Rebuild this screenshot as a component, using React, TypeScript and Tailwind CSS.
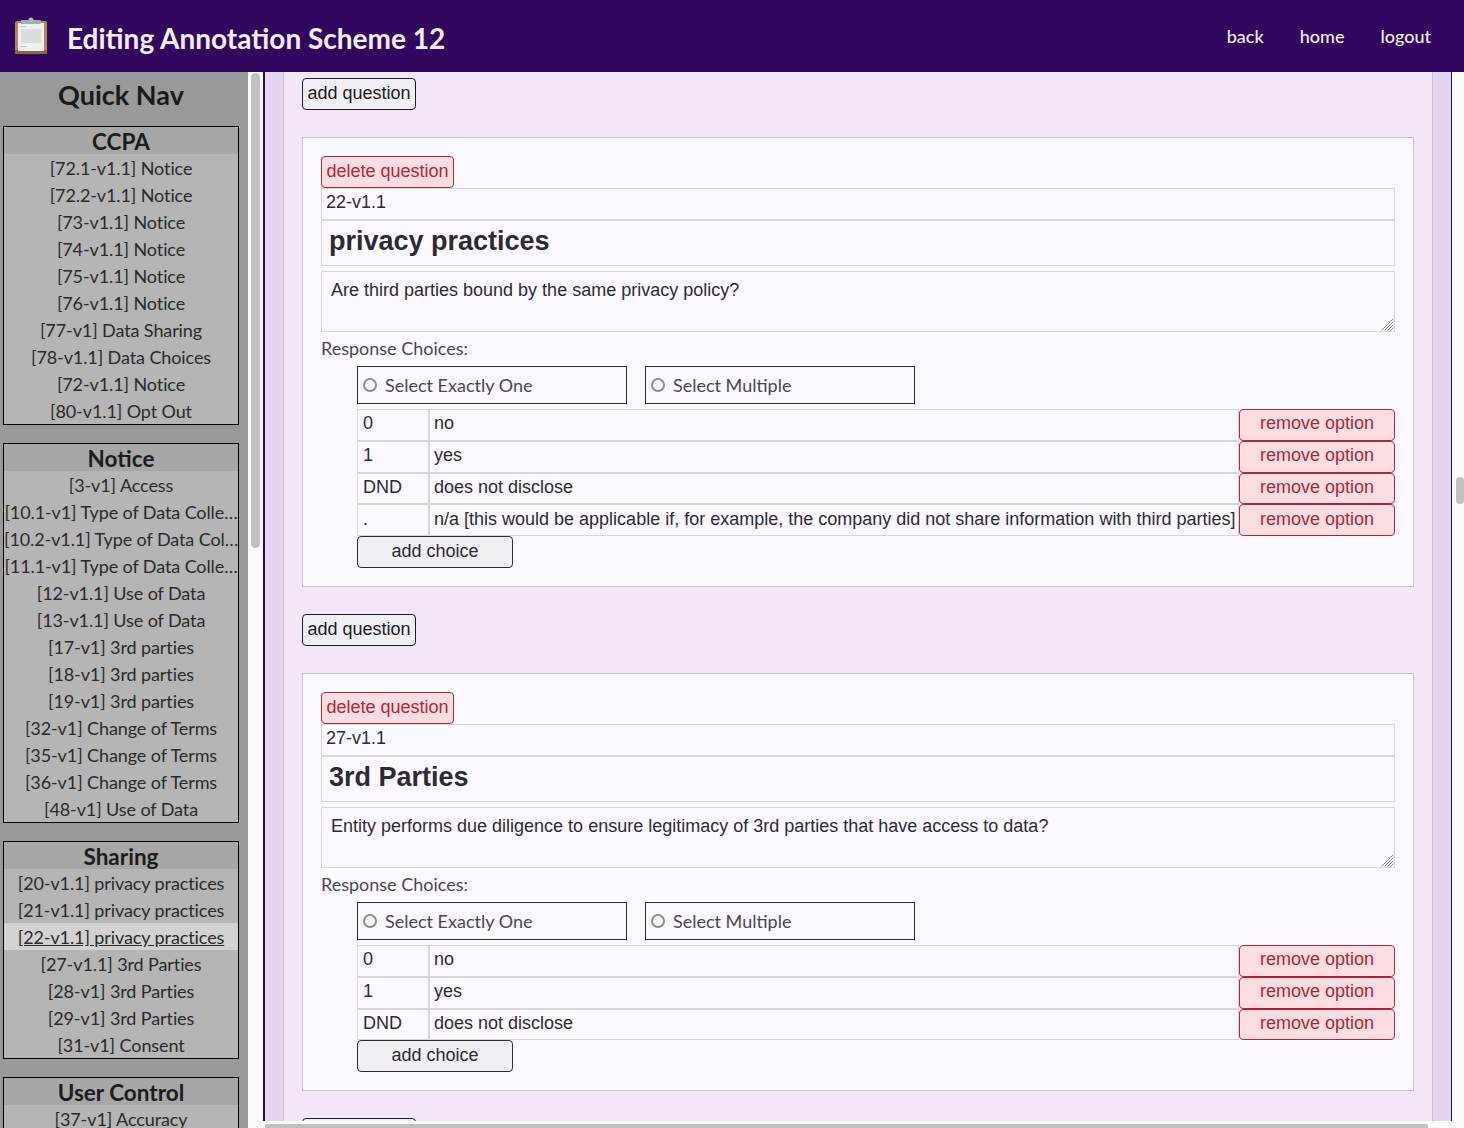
const navSections = [
  {
    title: 'CCPA',
    items: [
      '[72.1-v1.1] Notice',
      '[72.2-v1.1] Notice',
      '[73-v1.1] Notice',
      '[74-v1.1] Notice',
      '[75-v1.1] Notice',
      '[76-v1.1] Notice',
      '[77-v1] Data Sharing',
      '[78-v1.1] Data Choices',
      '[72-v1.1] Notice',
      '[80-v1.1] Opt Out',
    ],
  },
  {
    title: 'Notice',
    items: [
      '[3-v1] Access',
      '[10.1-v1] Type of Data Colle…',
      '[10.2-v1.1] Type of Data Col…',
      '[11.1-v1] Type of Data Colle…',
      '[12-v1.1] Use of Data',
      '[13-v1.1] Use of Data',
      '[17-v1] 3rd parties',
      '[18-v1] 3rd parties',
      '[19-v1] 3rd parties',
      '[32-v1] Change of Terms',
      '[35-v1] Change of Terms',
      '[36-v1] Change of Terms',
      '[48-v1] Use of Data',
    ],
  },
  {
    title: 'Sharing',
    items: [
      '[20-v1.1] privacy practices',
      '[21-v1.1] privacy practices',
      '[22-v1.1] privacy practices',
      '[27-v1.1] 3rd Parties',
      '[28-v1] 3rd Parties',
      '[29-v1] 3rd Parties',
      '[31-v1] Consent',
    ],
  },
  { title: 'User Control', items: ['[37-v1] Accuracy'] },
];

const questions = [
  {
    id: '22-v1.1',
    name: 'privacy practices',
    text: 'Are third parties bound by the same privacy policy?',
    choices: [
      ['0', 'no'],
      ['1', 'yes'],
      ['DND', 'does not disclose'],
      ['.', 'n/a [this would be applicable if, for example, the company did not share information with third parties]'],
    ],
  },
  {
    id: '27-v1.1',
    name: '3rd Parties',
    text: 'Entity performs due diligence to ensure legitimacy of 3rd parties that have access to data?',
    choices: [
      ['0', 'no'],
      ['1', 'yes'],
      ['DND', 'does not disclose'],
    ],
  },
];

function ClipboardIcon() {
  return (
    <svg width="34" height="38" viewBox="0 0 34 38" className="shrink-0">
      <rect x="1" y="4" width="32" height="33" rx="2" fill="#b08a52" />
      <rect x="1" y="33" width="32" height="4" rx="1" fill="#8a6a3c" />
      <rect x="4" y="6" width="26" height="28" fill="#efefef" />
      <rect x="7" y="12" width="20" height="14" fill="#dcdcdc" />
      <rect x="6" y="9" width="6" height="1" fill="#c4c4c4" />
      <rect x="6" y="29" width="7" height="1" fill="#c4c4c4" />
      <rect x="7" y="3" width="20" height="4" rx="1" fill="#a9a9b4" />
      <circle cx="17" cy="3" r="2.5" fill="#b4b4c0" />
    </svg>
  );
}

function NavBox({ title, items }: { title: string; items: string[] }) {
  return (
    <div className="mx-[3px] mb-[18px] w-[236px] shrink-0 border border-black bg-[#b5b5b5]">
      <div className="h-[27px] bg-[#a7a7a7] text-center text-[22.5px] leading-[29px] font-bold text-[#1c1c1c]">{title}</div>
      {items.map((item) => {
        const active = item.startsWith('[22-v1.1]');
        return (
          <div
            key={item}
            className={`h-[27px] overflow-hidden text-center text-[18px] leading-[29px] tracking-[-0.1px] whitespace-nowrap text-[#2a2a2a] ${active ? 'bg-[#d2d2d2] underline' : ''}`}
          >
            {item}
          </div>
        );
      })}
    </div>
  );
}

function AddQuestion() {
  return (
    <button className="block h-8 w-[114px] rounded-[4px] border border-[#1c1a22] bg-[#f0eff4] pb-[2px] text-[18px] leading-[26px] text-[#1c1a22]">
      add question
    </button>
  );
}

function RadioBox({ label }: { label: string }) {
  return (
    <label className="flex h-[38px] w-[270px] items-center border border-[#2a2830] pl-[5px] text-[18px] text-[#4a4750]">
      <input type="radio" name={label} className="m-0 h-[14px] w-[14px] appearance-none rounded-full border-2 border-[#8f8ba0] bg-[#fbf9ff]" />
      <span className="ml-[8px]">{label}</span>
    </label>
  );
}

function QuestionCard({ q }: { q: (typeof questions)[number] }) {
  return (
    <div className="mt-[27px] border border-[#c8c5cc] bg-[#fbf9ff] px-[18px] pt-[18px] pb-[18px]">
      <button className="block h-8 w-[133px] rounded-[4px] border border-[#a82a36] bg-[#fcdde1] pb-[2px] text-[18px] leading-[26px] text-[#a82a36]">
        delete question
      </button>
      <input
        readOnly
        value={q.id}
        className="block h-8 w-full border border-[#d8d6dc] bg-[#fbf9ff] px-[4px] pb-[4px] text-[18px] text-[#2d2a32] outline-none"
      />
      <input
        readOnly
        value={q.name}
        className="block h-[46px] w-full border border-[#d8d6dc] bg-[#fbf9ff] px-[7px] pb-[4px] text-[27px] font-bold text-[#2d2a32] outline-none"
      />
      <div className="relative mt-[5px]">
        <textarea
          readOnly
          value={q.text}
          className="block h-[61px] w-full resize-none border border-[#d8d6dc] bg-[#fbf9ff] px-[9px] py-[6px] text-[18px] leading-[24px] text-[#2d2a32] outline-none"
        />
        <svg width="13" height="13" viewBox="0 0 13 13" className="absolute right-[1px] bottom-[1px]" stroke="#8e8c94" strokeWidth="1">
          <path d="M0.5 12.5 L12.5 0.5 M3.5 12.5 L12.5 3.5 M6.5 12.5 L12.5 6.5 M9.5 12.5 L12.5 9.5" />
        </svg>
      </div>
      <div className="mt-[5px] h-[22px] font-['Lato',sans-serif] text-[18px] leading-[22px] text-[#4a4750]">Response Choices:</div>
      <div className="pl-[36px]">
        <div className="mt-[7px] flex gap-[18px] font-['Lato',sans-serif]">
          <RadioBox label="Select Exactly One" />
          <RadioBox label="Select Multiple" />
        </div>
        <div className="mt-[5px]">
          {q.choices.map(([code, label]) => (
            <div key={code} className="flex h-[31.75px]">
              <input
                readOnly
                value={code}
                className="h-full w-[72px] shrink-0 border border-[#d8d6dc] bg-[#fbf9ff] px-[5px] pb-[2px] text-[18px] text-[#2d2a32] outline-none"
              />
              <input
                readOnly
                value={label}
                className="h-full min-w-0 flex-1 border border-[#d8d6dc] bg-[#fbf9ff] pr-0 pb-[2px] pl-[4px] text-[18px] text-[#2d2a32] outline-none"
              />
              <button className="h-full w-[156px] shrink-0 rounded-[4px] border border-[#a82a36] bg-[#fcdde1] pb-[3px] text-[18px] leading-[24px] text-[#a82a36]">
                remove option
              </button>
            </div>
          ))}
        </div>
        <button className="block h-8 w-[156px] rounded-[4px] border border-[#2a2830] bg-[#f0eff4] pb-[3px] text-[18px] leading-[26px] text-[#2d2a32]">
          add choice
        </button>
      </div>
    </div>
  );
}

export default function App() {
  return (
    <div className="flex h-[1128px] w-[1464px] flex-col overflow-hidden bg-[#fafafa] font-['Liberation_Sans',sans-serif]">
      {/* Header */}
      <header className="flex h-[72px] shrink-0 items-center justify-between bg-[#32065f] pr-[33px] pl-[14px] font-['Lato',sans-serif] text-[#f3f0f7]">
        <div className="flex items-center">
          <ClipboardIcon />
          <h1 className="ml-[19px] pt-[4px] text-[28px] font-bold">Editing Annotation Scheme 12</h1>
        </div>
        <nav className="flex gap-[36px] text-[18px] font-medium">
          <span>back</span>
          <span>home</span>
          <span>logout</span>
        </nav>
      </header>

      <div className="flex min-h-0 flex-1">
        {/* Quick nav */}
        <aside className="flex w-[248px] shrink-0 flex-col overflow-hidden bg-[#999999] font-['Lato',sans-serif]">
          <h2 className="h-[54px] shrink-0 pr-[6px] text-center text-[27px] leading-[45px] font-bold text-[#1a1a1a]">Quick Nav</h2>
          {navSections.map((section) => (
            <NavBox key={section.title} title={section.title} items={section.items} />
          ))}
        </aside>
        <div className="w-[15px] shrink-0 bg-[#fafafa] px-[3px] pt-px">
          <div className="h-[475px] w-[9px] rounded-full bg-[#c1c1c1]" />
        </div>

        <div className="flex min-w-0 flex-1 flex-col">
          <div className="flex min-h-0 flex-1">
            <main className="min-w-0 flex-1 overflow-hidden border-r border-l-2 border-[#32065f] bg-[#e6d5f0] px-[18px]">
              <div className="h-full border-x border-[#c8c5cc] bg-[#f3e6f8] px-[18px] pt-[6px]">
                <AddQuestion />
                <QuestionCard q={questions[0]} />
                <div className="mt-[27px]">
                  <AddQuestion />
                </div>
                <QuestionCard q={questions[1]} />
                <div className="mt-[27px]">
                  <AddQuestion />
                </div>
              </div>
            </main>
            <div className="w-[12px] shrink-0 pt-[405px] pl-[4px]">
              <div className="h-[27px] w-[8px] rounded-full bg-[#c1c1c1]" />
            </div>
          </div>
          <div className="h-[7px] shrink-0 pt-[3px] pl-[2px]">
            <div className="h-[4px] w-[1163px] rounded-t-[2px] bg-[#c1c1c1]" />
          </div>
        </div>
      </div>
    </div>
  );
}
